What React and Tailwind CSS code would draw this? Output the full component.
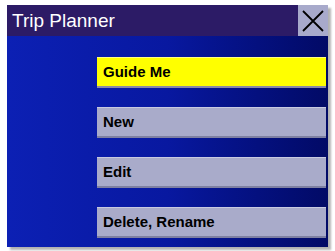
import React from "react";

const items = ["Guide Me", "New", "Edit", "Delete, Rename"];

const App = () => {
  return (
    <div className="w-[335px] h-[251px] bg-white pt-[5px] pl-[7px]" style={{ fontFamily: "'Liberation Sans', Arial, sans-serif" }}>
      <div className="w-[321px] h-[242px] flex flex-col shadow-[3px_3px_2px_rgba(0,0,0,0.3)]">
        <div className="h-[31px] flex items-center bg-[#2c1b66]">
          <div className="flex-1 pl-[5px] text-white text-[19px] leading-none">Trip Planner</div>
          <div className="w-[30px] h-[31px] bg-[#a8aacb] flex items-center justify-center">
            <svg width="24" height="24" viewBox="0 0 24 24">
              <path d="M2 2 L22 22 M22 2 L2 22" stroke="#000" strokeWidth="1.8" fill="none" />
            </svg>
          </div>
        </div>
        <div className="flex-1 bg-gradient-to-r from-[#0c20b4] via-[#0818a0] to-[#020a66] flex flex-col gap-[19px] pt-[21px] pl-[90px] pr-[2px]">
          {items.map((label, i) => (
            <div
              key={label}
              className={`h-[31px] flex items-center pl-[6px] text-[15px] font-bold text-black border-t border-b-2 ${
                i === 0
                  ? "bg-[#ffff00] border-t-[#ffff80] border-b-[#8a8aa8]"
                  : "bg-[#a9abca] border-t-[#c8cae0] border-b-[#7e80a2]"
              }`}
            >
              {label}
            </div>
          ))}
        </div>
      </div>
    </div>
  );
};

export default App;
